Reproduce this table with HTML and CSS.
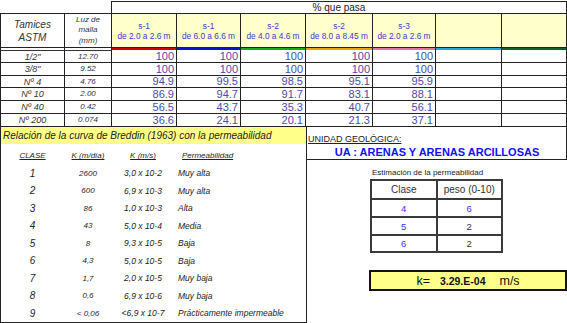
FILE: index.html
```html
<!DOCTYPE html>
<html lang="es">
<head>
<meta charset="utf-8">
<title>Permeabilidad</title>
<link rel="stylesheet" href="styles.css">
</head>
<body>
<div class="sheet">
  <table class="grain">
    <colgroup>
      <col class="w64"><col class="w47"><col class="w65"><col class="w64"><col class="w65"><col class="w67"><col class="w63"><col class="w66"><col class="w65">
    </colgroup>
    <tr class="r-title">
      <td colspan="2" class="blank"></td>
      <td colspan="7" class="title">% que pasa</td>
    </tr>
    <tr class="r-head">
      <th class="h-tam">Tamices<br>ASTM</th>
      <th class="h-luz">Luz de<br>malla<br>(mm)</th>
      <th class="h-s">s-1<br>de 2.0 a 2.6 m</th>
      <th class="h-s">s-1<br>de 6.0 a 6.6 m</th>
      <th class="h-s">s-2<br>de 4.0 a 4.6 m</th>
      <th class="h-s">s-2<br>de 8.0 a 8.45 m</th>
      <th class="h-s">s-3<br>de 2.0 a 2.6 m</th>
      <th class="h-s"></th>
      <th class="h-s"></th>
    </tr>
    <tr class="r-d r-first">
      <td class="lab st-dbl">1/2"</td><td class="luz st-dbl">12.70</td>
      <td class="val st-red">100</td><td class="val st-blue">100</td><td class="val st-green">100</td><td class="val st-orange">100</td><td class="val st-pink">100</td><td class="val st-cyan"></td><td class="val st-dgreen"></td>
    </tr>
    <tr class="r-d r-13">
      <td class="lab">3/8"</td><td class="luz">9.52</td>
      <td class="val">100</td><td class="val">100</td><td class="val">100</td><td class="val">100</td><td class="val">100</td><td class="val"></td><td class="val"></td>
    </tr>
    <tr class="r-d r-12">
      <td class="lab">Nº 4</td><td class="luz">4.76</td>
      <td class="val">94.9</td><td class="val">99.5</td><td class="val">98.5</td><td class="val">95.1</td><td class="val">95.9</td><td class="val"></td><td class="val"></td>
    </tr>
    <tr class="r-d r-13">
      <td class="lab">Nº 10</td><td class="luz">2.00</td>
      <td class="val">86.9</td><td class="val">94.7</td><td class="val">91.7</td><td class="val">83.1</td><td class="val">88.1</td><td class="val"></td><td class="val"></td>
    </tr>
    <tr class="r-d r-13">
      <td class="lab">Nº 40</td><td class="luz">0.42</td>
      <td class="val">56.5</td><td class="val">43.7</td><td class="val">35.3</td><td class="val">40.7</td><td class="val">56.1</td><td class="val"></td><td class="val"></td>
    </tr>
    <tr class="r-d r-13">
      <td class="lab">Nº 200</td><td class="luz">0.074</td>
      <td class="val">36.6</td><td class="val">24.1</td><td class="val">20.1</td><td class="val">21.3</td><td class="val">37.1</td><td class="val"></td><td class="val"></td>
    </tr>
  </table>

  <div class="lower">
    <section class="breddin">
      <div class="bar">Relación de la curva de Breddin (1963) con la permeabilidad</div>
      <div class="kgrid">
        <span class="kh">CLASE</span><span class="kh">K (m/día)</span><span class="kh">K (m/s)</span><span class="kh kh-p">Permeabilidad</span>
        <span class="cls">1</span><span class="km">2600</span><span class="ks">3,0 x 10-2</span><span class="kp">Muy alta</span>
        <span class="cls">2</span><span class="km">600</span><span class="ks">6,9 x 10-3</span><span class="kp">Muy alta</span>
        <span class="cls">3</span><span class="km">86</span><span class="ks">1,0 x 10-3</span><span class="kp">Alta</span>
        <span class="cls">4</span><span class="km">43</span><span class="ks">5,0 x 10-4</span><span class="kp">Media</span>
        <span class="cls">5</span><span class="km">8</span><span class="ks">9,3 x 10-5</span><span class="kp">Baja</span>
        <span class="cls">6</span><span class="km">4,3</span><span class="ks">5,0 x 10-5</span><span class="kp">Baja</span>
        <span class="cls">7</span><span class="km">1,7</span><span class="ks">2,0 x 10-5</span><span class="kp">Muy baja</span>
        <span class="cls">8</span><span class="km">0,6</span><span class="ks">6,9 x 10-6</span><span class="kp">Muy baja</span>
        <span class="cls">9</span><span class="km">&lt; 0,06</span><span class="ks">&lt;6,9 x 10-7</span><span class="kp">Prácticamente impermeable</span>
      </div>
    </section>

    <section class="unit">
      <div class="unit-box">
        <div class="unit-label">UNIDAD GEOLÓGICA:</div>
        <div class="unit-name">UA : ARENAS Y ARENAS ARCILLOSAS</div>
      </div>
      <div class="estim">
        <div class="estim-title">Estimación de la permeabilidad</div>
        <table class="estim-table">
          <tr class="e-head"><th>Clase</th><th>peso (0-10)</th></tr>
          <tr><td class="blue">4</td><td class="blue">6</td></tr>
          <tr><td class="blue">5</td><td>2</td></tr>
          <tr class="e-last"><td class="blue">6</td><td>2</td></tr>
        </table>
      </div>
      <div class="kbox"><span class="k-lab">k=</span><span class="k-val">3.29.E-04</span><span class="k-unit">m/s</span></div>
    </section>
  </div>
</div>
</body>
</html>
```

FILE: styles.css
```css
* { box-sizing: border-box; }

body {
  margin: 0;
  background: #fff;
  font-family: "Liberation Sans", Arial, sans-serif;
  color: #222;
}

.sheet {
  width: 567px;
  padding-top: 1px;
}

/* ---------- grain size table ---------- */
.grain {
  border-collapse: collapse;
  table-layout: fixed;
  width: 567px;
}
.w64 { width: 64px; }
.w47 { width: 47px; }
.w65 { width: 65px; }
.w67 { width: 67px; }
.w63 { width: 63px; }
.w66 { width: 66px; }

.grain td, .grain th {
  border: 1px solid #222;
  padding: 0;
  overflow: hidden;
  white-space: nowrap;
}
.grain td.blank { border: none; }

.r-title { height: 12px; }
.title {
  text-align: center;
  font-size: 10px;
  line-height: 11px;
  color: #222;
}

.r-head { height: 34px; }
.r-head th { font-weight: normal; }
.h-tam {
  font-style: italic;
  font-size: 10px;
  line-height: 13px;
  color: #333;
}
.h-luz {
  font-style: italic;
  font-size: 8px;
  line-height: 10.5px;
  color: #333;
}
.h-s {
  background: #ffffcc;
  color: #3a3ad0;
  font-size: 8.3px;
  line-height: 10px;
}

.r-first { height: 15px; }
.r-13 { height: 13px; }
.r-12 { height: 12px; }

.lab {
  text-align: center;
  font-style: italic;
  font-size: 9px;
  line-height: 10px;
  color: #333;
}
.luz {
  text-align: center;
  font-style: italic;
  font-size: 8px;
  line-height: 10px;
  color: #333;
}
.val {
  text-align: right;
  padding-right: 2px !important;
  font-size: 11px;
  line-height: 11px;
  color: #4b4ba8;
}
.r-first td { vertical-align: bottom; }

.st-dbl   { box-shadow: inset 0 2px 0 #fff, inset 0 3px 0 #333; }
.st-red   { box-shadow: inset 0 2px 0 #d00000; }
.st-blue  { box-shadow: inset 0 2px 0 #1010d0; }
.st-green { box-shadow: inset 0 2px 0 #10b010; }
.st-orange{ box-shadow: inset 0 2px 0 #f0a000; }
.st-pink  { box-shadow: inset 0 2px 0 #e870a0; }
.st-cyan  { box-shadow: inset 0 2px 0 #20a8e0; }
.st-dgreen{ box-shadow: inset 0 2px 0 #106030; }

/* ---------- lower area ---------- */
.lower {
  display: flex;
  align-items: flex-start;
}

.breddin {
  width: 307px;
  border: 1px solid #222;
  border-top: none;
  height: 196px;
}
.bar {
  background: #ffff8a;
  height: 17px;
  line-height: 17px;
  padding-left: 2px;
  font-style: italic;
  font-size: 10px;
  color: #222;
  white-space: nowrap;
}
.kgrid {
  display: grid;
  grid-template-columns: 63px 48px 62px 1fr;
  grid-auto-rows: 17.5px;
  align-items: center;
  padding-top: 3px;
  font-style: italic;
  font-size: 8px;
  color: #222;
}
.kh {
  text-align: center;
  text-decoration: underline;
}
.kh-p { text-align: left; padding-left: 8px; }
.cls { text-align: center; font-size: 10px; }
.km, .ks { text-align: center; }
.km { font-size: 8px; }
.ks { font-size: 8.5px; }
.kp { padding-left: 4px; font-size: 8.5px; white-space: nowrap; }

.unit {
  width: 260px;
}
.unit-box {
  height: 33px;
  border-right: 1px solid #222;
  border-bottom: 1px solid #222;
  padding-left: 1px;
  padding-top: 6px;
}
.unit-label {
  font-size: 9px;
  line-height: 12px;
  text-decoration: underline;
  color: #222;
}
.unit-name {
  text-align: center;
  font-weight: bold;
  font-size: 11px;
  line-height: 14px;
  color: #1010f0;
}

.estim {
  margin-left: 63px;
  padding-top: 7px;
}
.estim-title {
  padding-left: 2px;
  font-size: 8px;
  line-height: 12px;
  color: #222;
}
.estim-table {
  border-collapse: collapse;
  table-layout: fixed;
  width: 133px;
}
.estim-table th, .estim-table td {
  border: 2px solid #3a3a3a;
  width: 50%;
  text-align: center;
  padding: 0;
  font-size: 10px;
  color: #333;
  height: 18px;
}
.estim-table th { font-weight: normal; }
.estim-table .e-head th { height: 19px; }
.estim-table .e-last td { height: 17px; }
.estim-table td { font-size: 9.5px; }
.estim-table td.blue { color: #3535ff; }

.kbox {
  margin-left: 62px;
  margin-top: 17px;
  width: 198px;
  height: 21px;
  border: 2px solid #111;
  background: #ffff8a;
  display: flex;
  align-items: center;
  justify-content: center;
  color: #111;
}
.k-lab { font-size: 12.5px; margin-right: 10px; }
.k-val { font-size: 10.5px; font-weight: bold; margin-right: 14px; }
.k-unit { font-size: 12.5px; }
```
